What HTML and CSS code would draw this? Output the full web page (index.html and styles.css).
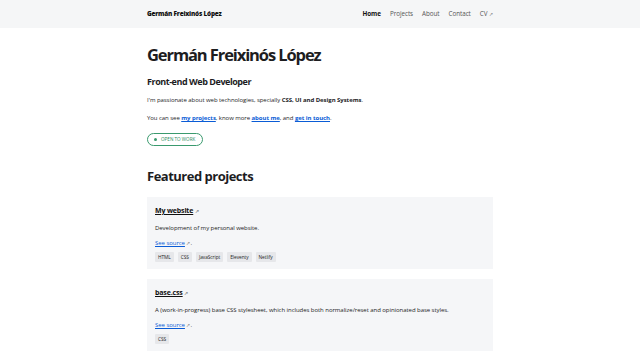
FILE: index.html
```html
<!DOCTYPE html>
<html lang="en">
<head>
  <meta charset="UTF-8">
  <meta name="viewport" content="width=device-width, initial-scale=1.0">
  <title>Germán Freixinós López</title>
  <link rel="stylesheet" href="styles.css">
</head>
<body>
  <header class="site-header">
    <div class="wrap header-inner">
      <a class="brand" href="#">Germán Freixinós López</a>
      <nav class="nav">
        <a class="nav-link active" href="#">Home</a>
        <a class="nav-link" href="#">Projects</a>
        <a class="nav-link" href="#">About</a>
        <a class="nav-link" href="#">Contact</a>
        <a class="nav-link" href="#">CV <span class="ext">&#8599;</span></a>
      </nav>
    </div>
  </header>

  <main class="wrap">
    <section class="intro">
      <h1>Germán Freixinós López</h1>
      <h2 class="role">Front-end Web Developer</h2>
      <p>I'm passionate about web technologies, specially <strong>CSS, UI and Design Systems</strong>.</p>
      <p>You can see <a href="#">my projects</a>, know more <a href="#">about me</a>, and <a href="#">get in touch</a>.</p>
      <div class="badge"><span class="dot"></span>OPEN TO WORK</div>
    </section>

    <section class="projects">
      <h2 class="section-title">Featured projects</h2>

      <article class="card">
        <h3 class="card-title"><a href="#">My website</a> <span class="ext">&#8599;</span></h3>
        <p>Development of my personal website.</p>
        <p class="source"><a href="#">See source</a> <span class="ext">&#8599;</span>.</p>
        <ul class="tags">
          <li>HTML</li>
          <li>CSS</li>
          <li>JavaScript</li>
          <li>Eleventy</li>
          <li>Netlify</li>
        </ul>
      </article>

      <article class="card">
        <h3 class="card-title"><a href="#">base.css</a> <span class="ext">&#8599;</span></h3>
        <p>A (work-in-progress) base CSS stylesheet, which includes both normalize/reset and opinionated base styles.</p>
        <p class="source"><a href="#">See source</a> <span class="ext">&#8599;</span>.</p>
        <ul class="tags">
          <li>CSS</li>
        </ul>
      </article>
    </section>
  </main>
</body>
</html>
```

FILE: styles.css
```css
body {
  margin: 0;
  font-family: "Open Sans", "Noto Sans", sans-serif;
  color: #1d1d1f;
  background-color: #fff;
  font-size: 6px;
  line-height: 1.5;
  letter-spacing: -0.05px;
}

.wrap {
  width: 346px;
  margin: 0 auto;
}

.site-header {
  background-color: #f5f6f7;
}

.header-inner {
  height: 28px;
  display: flex;
  align-items: center;
  justify-content: space-between;
}

.brand {
  font-size: 6.4px;
  font-weight: 800;
  letter-spacing: -0.2px;
  color: #111;
  text-decoration: none;
}

.nav {
  display: flex;
  gap: 9px;
}

.nav-link {
  font-size: 6.3px;
  color: #555;
  text-decoration: none;
}

.nav-link.active {
  color: #111;
  font-weight: 700;
}

.ext {
  font-size: 4.5px;
  color: #888;
}

h1 {
  margin: 15px 0 0;
  font-size: 16.5px;
  line-height: 24px;
  font-weight: 700;
  letter-spacing: -1.1px;
}

.role {
  margin: 8px 0 0;
  font-size: 9px;
  line-height: 14px;
  font-weight: 700;
  letter-spacing: -0.45px;
}

.intro p {
  margin: 5px 0 0;
  line-height: 12px;
}

.intro p + p {
  margin-top: 6px;
}

.intro a {
  color: #0a5cd6;
  font-weight: 700;
}

.badge {
  display: flex;
  width: fit-content;
  align-items: center;
  gap: 4px;
  margin-top: 9px;
  height: 11px;
  padding: 0 7px 0 6px;
  border: 1px solid #3a9a6e;
  border-radius: 8px;
  color: #2b8a5e;
  font-size: 4.6px;
  letter-spacing: 0;
}

.dot {
  width: 3px;
  height: 3px;
  border-radius: 50%;
  background-color: #3a9a6e;
}

.section-title {
  margin: 20px 0 11px;
  font-size: 13px;
  line-height: 20px;
  font-weight: 700;
  letter-spacing: -0.5px;
}

.card {
  background-color: #f5f6f8;
  padding: 8px 8px 7px;
  margin-bottom: 10px;
}

.card-title {
  margin: 0;
  font-size: 7px;
  line-height: 12px;
  letter-spacing: -0.15px;
}

.card-title a {
  color: #111;
  font-weight: 700;
}

.card p {
  margin: 5px 0 0;
  line-height: 12px;
}

.card .source {
  margin-top: 3px;
}

.source a {
  color: #0a5cd6;
}

.tags {
  list-style: none;
  margin: 3px 0 0;
  padding: 0;
  display: flex;
  gap: 4px;
}

.tags li {
  background-color: #e6e7ea;
  font-size: 4.8px;
  line-height: 10px;
  padding: 0 3px;
  border-radius: 1px;
}
```
